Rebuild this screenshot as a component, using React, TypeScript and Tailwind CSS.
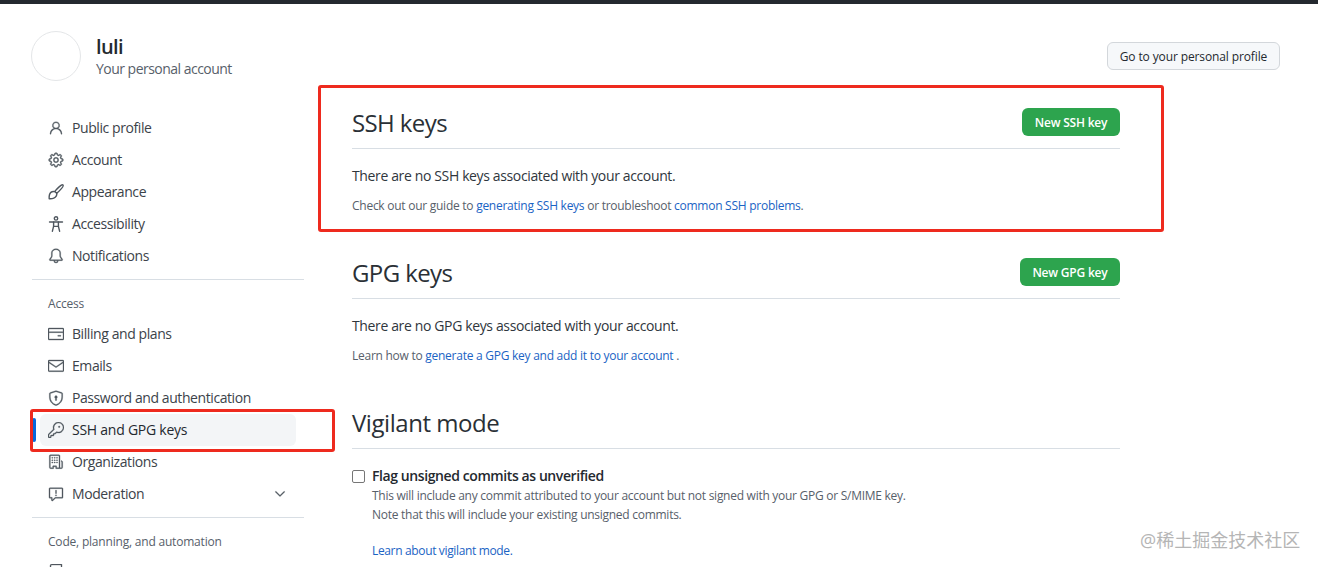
import React from 'react';
import {
  GoPerson,
  GoGear,
  GoBell,
  GoCreditCard,
  GoMail,
  GoShieldLock,
  GoKey,
  GoOrganization,
  GoReport,
  GoChevronDown,
  GoRepo,
} from 'react-icons/go';

const font = "font-['Open_Sans','Noto_Sans_CJK_SC',sans-serif]";

const BrushIcon = ({ className }: { className?: string }) => (
  <svg viewBox="0 0 16 16" width="16" height="16" fill="none" stroke="currentColor" strokeWidth="1.4" strokeLinejoin="round" strokeLinecap="round" className={className}>
    <path d="M15 1c.6.6-.2 2-1.6 3.6C12 6.2 10.2 8 8.7 9.3L6.8 7.4C8 5.9 9.8 4 11.4 2.6 13 1.2 14.4.4 15 1Z" />
    <path d="M6.7 7.6C4.2 7.2 2 8.6 1.4 11c-.3 1.4-.3 2.6-.2 3.7 1.6.2 3.2 0 4.6-.6 2.2-1 3.2-2.8 3-4.9" />
  </svg>
);

const AccessibilityIcon = ({ className }: { className?: string }) => (
  <svg viewBox="0 0 16 16" width="16" height="16" fill="none" stroke="currentColor" strokeWidth="1.4" strokeLinecap="round" strokeLinejoin="round" className={className}>
    <circle cx="8" cy="2.4" r="1.7" />
    <path d="M1.5 6h13" />
    <path d="M5.6 6v4.4L4.4 15.2M10.4 6v4.4l1.2 4.8" />
    <path d="M5.6 10.4h4.8" />
  </svg>
);

const NavItem = ({ icon: Icon, label, active, chevron }: { icon: React.ElementType; label?: string; active?: boolean; chevron?: boolean }) => (
  <div className={`relative mx-2 flex h-8 items-center gap-2 rounded-md px-2 text-sm ${active ? 'bg-[#f3f5f7] font-medium tracking-[-0.25px] text-[#24292f]' : 'tracking-[-0.42px] text-[#3c434a]'}`}>
    {active && <span className="absolute -left-2 top-1 h-6 w-1 rounded-md bg-[#0969da]"></span>}
    <Icon className="text-base text-[#4f575f]" stroke="currentColor" strokeWidth={0.5} />
    <span>{label}</span>
    {chevron && <GoChevronDown className="ml-auto text-base text-[#4f575f]" stroke="currentColor" strokeWidth={0.5} />}
  </div>
);

const Section = ({ title, button, btnWidth, text, children }: { title: string; button: string; btnWidth: string; text: string; children: React.ReactNode }) => (
  <section className="h-[150px]">
    <div className="flex h-[50px] items-start justify-between border-b border-[#d8dee4]">
      <h2 className="mt-2 text-2xl font-normal leading-8 tracking-[-0.6px] text-[#2a3036]">{title}</h2>
      <button className={`mt-[9px] h-7 ${btnWidth} rounded-md bg-[#2da44e] pt-[1px] text-xs font-semibold tracking-[-0.2px] text-white`}>{button}</button>
    </div>
    <p className="mt-[17px] text-sm leading-5 tracking-[-0.365px] text-[#2f363d]">{text}</p>
    <p className="mt-[11px] text-xs leading-[18px] tracking-[-0.26px] text-[#57606a]">{children}</p>
  </section>
);

const Link = ({ children }: { children: React.ReactNode }) => <a className="text-[#1a63c4]">{children}</a>;

export default function App() {
  return (
    <div className={`relative h-[567px] w-[1318px] overflow-hidden bg-white ${font}`}>
      <div className="h-1 bg-[#24292f]"></div>

      <header className="flex h-[80px] items-start justify-between pl-[31px] pr-[38px] pt-[27px]">
        <div className="flex gap-[15px]">
          <div className="h-[50px] w-[50px] rounded-full border border-[#e4e6e8] bg-white"></div>
          <div>
            <div className="text-xl font-semibold leading-[31px] tracking-[-0.6px] text-[#24292f]">luli</div>
            <div className="text-sm leading-[14px] tracking-[-0.52px] text-[#57606a]">Your personal account</div>
          </div>
        </div>
        <button className="mt-[11px] h-7 w-[173px] rounded-md border border-[#d3d7db] bg-[#f6f8fa] pt-[1px] text-xs font-medium tracking-[-0.12px] text-[#24292f]">
          Go to your personal profile
        </button>
      </header>

      <div className="flex">
        <aside className="ml-8 mt-[28px] w-[272px]">
          <NavItem icon={GoPerson} label="Public profile" />
          <NavItem icon={GoGear} label="Account" />
          <NavItem icon={BrushIcon} label="Appearance" />
          <NavItem icon={AccessibilityIcon} label="Accessibility" />
          <NavItem icon={GoBell} label="Notifications" />
          <div className="mt-[7px] border-t border-[#d8dee4]"></div>
          <div className="flex h-[38px] items-center px-4 pt-[10px] text-xs tracking-[-0.2px] text-[#57606a]">Access</div>
          <NavItem icon={GoCreditCard} label="Billing and plans" />
          <NavItem icon={GoMail} label="Emails" />
          <NavItem icon={GoShieldLock} label="Password and authentication" />
          <NavItem icon={GoKey} label="SSH and GPG keys" active />
          <NavItem icon={GoOrganization} label="Organizations" />
          <NavItem icon={GoReport} label="Moderation" chevron />
          <div className="mt-[7px] border-t border-[#d8dee4]"></div>
          <div className="flex h-[38px] items-center px-4 pt-[10px] text-xs font-medium tracking-[-0.2px] text-[#57606a]">Code, planning, and automation</div>
          <NavItem icon={GoRepo} />
        </aside>

        <main className="ml-12 mt-[15px] w-[768px]">
          <Section title="SSH keys" button="New SSH key" btnWidth="w-[98px]" text="There are no SSH keys associated with your account.">
            Check out our guide to <Link>generating SSH keys</Link> or troubleshoot <Link>common SSH problems</Link>.
          </Section>
          <Section title="GPG keys" button="New GPG key" btnWidth="w-[100px]" text="There are no GPG keys associated with your account.">
            Learn how to <Link>generate a GPG key and add it to your account</Link> .
          </Section>

          <section>
            <div className="flex h-[50px] items-start border-b border-[#d8dee4]">
              <h2 className="mt-2 text-2xl font-normal leading-8 tracking-[-0.45px] text-[#2a3036]">Vigilant mode</h2>
            </div>
            <label className="mt-[17px] flex h-5 items-center gap-[7px]">
              <span className="h-[13px] w-[13px] rounded-[2px] border border-[#767676] bg-white"></span>
              <span className="text-sm font-semibold tracking-[-0.41px] text-[#24292f]">Flag unsigned commits as unverified</span>
            </label>
            <div className="ml-5 text-xs leading-[18px] tracking-[-0.27px] text-[#57606a]">
              <p className="mt-[1px]">This will include any commit attributed to your account but not signed with your GPG or S/MIME key.</p>
              <p className="mt-[1px]">Note that this will include your existing unsigned commits.</p>
              <p className="mt-[18px] tracking-[-0.35px]"><Link>Learn about vigilant mode.</Link></p>
            </div>
          </section>
        </main>
      </div>

      {/* annotation boxes drawn over the screenshot */}
      <div className="absolute left-[318px] top-[85px] h-[147px] w-[846px] rounded-[3px] border-[3px] border-[#ee2a1e]"></div>
      <div className="absolute left-[30px] top-[409px] h-[43px] w-[305px] rounded-[3px] border-[3px] border-[#ee2a1e]"></div>

      <div className="absolute left-[1140px] top-[528px] text-lg leading-6 text-[#b5b5b5]">@稀土掘金技术社区</div>
    </div>
  );
}
